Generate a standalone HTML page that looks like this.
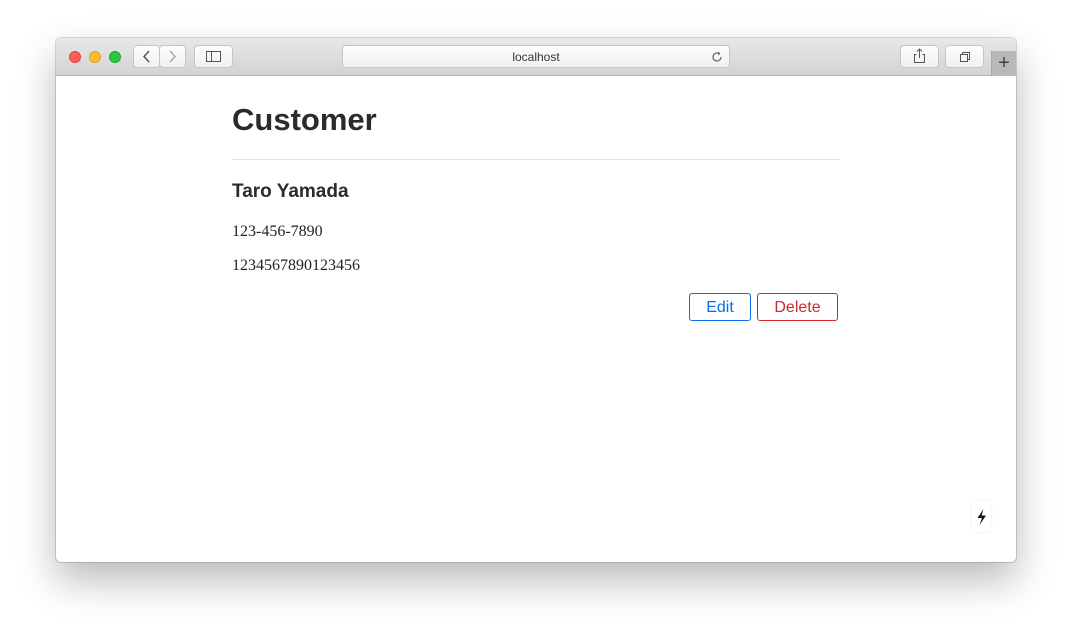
<!DOCTYPE html>
<html><head><style>
*{margin:0;padding:0;box-sizing:border-box}
body{width:1072px;height:636px;background:#fff;position:relative;overflow:hidden;font-family:"Liberation Sans",sans-serif}
.win{position:absolute;left:56px;top:38px;width:960px;height:524px;border-radius:5px;background:#fff;box-shadow:0 18px 40px rgba(0,0,0,.28),0 0 0 1px rgba(0,0,0,.15);overflow:hidden}
.bar{position:absolute;left:0;top:0;width:960px;height:38px;background:linear-gradient(#e8e8e8,#d3d3d3);border-bottom:1px solid #b5b5b5}
.dot{position:absolute;top:13px;width:12px;height:12px;border-radius:50%}
.btn{position:absolute;top:7px;height:23px;background:linear-gradient(#fdfdfd,#f1f1f1);border:1px solid #c6c6c6;border-radius:4px}
.abs{position:absolute}
</style></head><body>
<div class="win">
 <div class="bar">
  <div class="dot" style="left:13px;background:#fe5f57;border:1px solid #e0443e"></div>
  <div class="dot" style="left:33px;background:#febc2e;border:1px solid #dea123"></div>
  <div class="dot" style="left:53px;background:#28c840;border:1px solid #1aab29"></div>
  <div class="btn" style="left:77px;width:27px"><svg width="25" height="21"><path d="M15 5l-5 5.5 5 5.5" stroke="#555" stroke-width="1.5" fill="none"/></svg></div>
  <div class="btn" style="left:103px;width:27px"><svg width="25" height="21"><path d="M10 5l5 5.5-5 5.5" stroke="#aaa" stroke-width="1.5" fill="none"/></svg></div>
  <div class="btn" style="left:138px;width:39px"><svg width="37" height="21"><rect x="11.5" y="5.5" width="14" height="10" stroke="#555" fill="none"/><line x1="16.5" y1="5.5" x2="16.5" y2="15.5" stroke="#555"/></svg></div>
  <div class="btn" style="left:286px;width:388px;font-size:12px;color:#333;text-align:center;line-height:22px">localhost
   <svg class="abs" style="right:5px;top:4px" width="14" height="14"><path d="M11 7a4 4 0 1 1-2-3.5" stroke="#666" stroke-width="1.2" fill="none"/><path d="M8 1.5l2.5 2-2.5 2z" fill="#666"/></svg></div>
  <div class="btn" style="left:844px;width:39px"><svg width="37" height="21"><path d="M15.5 8.5h-2v8h10v-8h-2M18.5 3v9M16 5.5l2.5-2.5 2.5 2.5" stroke="#555" fill="none"/></svg></div>
  <div class="btn" style="left:889px;width:39px"><svg width="37" height="21"><rect x="14.5" y="8.5" width="7" height="7" stroke="#555" fill="none"/><path d="M16.5 8.5v-2h7v7h-2" stroke="#555" fill="none"/></svg></div>
  <div class="abs" style="left:935px;top:13px;width:25px;height:25px;background:#b8b8b8;border-left:1px solid #aaa;color:#444;font-size:20px;text-align:center;line-height:24px">+</div>
 </div>
 <div class="abs" style="left:176px;top:64px;font-size:31px;font-weight:bold;color:#2b2b2b;letter-spacing:0">Customer</div>
 <div class="abs" style="left:176px;top:121px;width:608px;height:1px;background:#e5e5e5"></div>
 <div class="abs" style="left:176px;top:143px;font-size:19px;font-weight:bold;color:#2b2b2b">Taro Yamada</div>
 <div class="abs" style="left:176px;top:185px;font-size:16px;font-family:'Liberation Serif',serif;color:#222">123-456-7890</div>
 <div class="abs" style="left:176px;top:219px;font-size:16px;font-family:'Liberation Serif',serif;color:#222">1234567890123456</div>
 <div class="abs" style="left:633px;top:255px;width:62px;height:28px;border:1px solid #0a6cf0;border-radius:3px;color:#0a6cf0;font-size:16px;text-align:center;line-height:28px">Edit</div>
 <div class="abs" style="left:701px;top:255px;width:81px;height:28px;border:1px solid #d0282e;border-radius:3px;color:#d0282e;font-size:16px;text-align:center;line-height:28px">Delete</div>
 <div class="abs" style="left:916px;top:463px;width:19px;height:31px;background:#fff;border-radius:3px;box-shadow:0 0 3px rgba(0,0,0,.08)"><svg width="19" height="31"><path d="M11.5 8l-6 9h4.5l-2.5 7 6.5-9.5h-4.5z" fill="#111"/></svg></div>
</div>
</body></html>
